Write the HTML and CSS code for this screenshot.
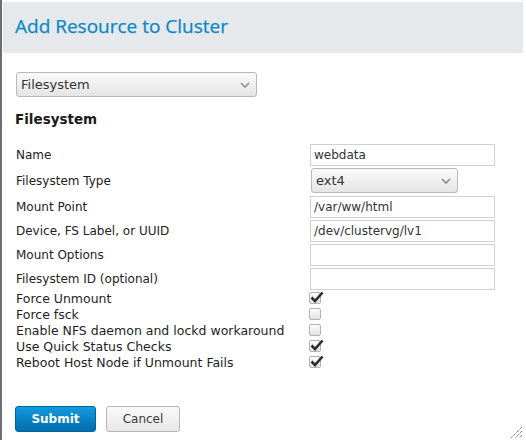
FILE: index.html
```html
<!DOCTYPE html>
<html>
<head>
<meta charset="utf-8">
<link rel="stylesheet" href="styles.css">
</head>
<body>
<div class="frame">
  <header class="hdr"><h1 class="title">Add Resource to Cluster</h1></header>
  <main class="content">
    <div class="sel sel-top"><span>Filesystem</span><svg class="chev" viewBox="0 0 10 6" width="10" height="6"><path d="M1 1 L5 5 L9 1" fill="none" stroke="#8a8a8a" stroke-width="1.6"/></svg></div>
    <h2 class="sub">Filesystem</h2>
    <div class="fields">
      <label class="lbl">Name</label><div class="inp">webdata</div>
      <label class="lbl">Filesystem Type</label><div class="sel sel-type"><span>ext4</span><svg class="chev" viewBox="0 0 10 6" width="10" height="6"><path d="M1 1 L5 5 L9 1" fill="none" stroke="#8a8a8a" stroke-width="1.6"/></svg></div>
      <label class="lbl">Mount Point</label><div class="inp">/var/ww/html</div>
      <label class="lbl">Device, FS Label, or UUID</label><div class="inp">/dev/clustervg/lv1</div>
      <label class="lbl">Mount Options</label><div class="inp"></div>
      <label class="lbl">Filesystem ID (optional)</label><div class="inp"></div>
    </div>
    <div class="checks">
      <span class="clbl">Force Unmount</span><span class="cb"><svg class="tick" viewBox="0 0 15 14" width="15" height="14"><path d="M2.5 7.5 L6 11 L13.5 2.5" fill="none" stroke="#2b2b2b" stroke-width="2.6"/></svg></span>
      <span class="clbl">Force fsck</span><span class="cb"></span>
      <span class="clbl">Enable NFS daemon and lockd workaround</span><span class="cb"></span>
      <span class="clbl">Use Quick Status Checks</span><span class="cb"><svg class="tick" viewBox="0 0 15 14" width="15" height="14"><path d="M2.5 7.5 L6 11 L13.5 2.5" fill="none" stroke="#2b2b2b" stroke-width="2.6"/></svg></span>
      <span class="clbl">Reboot Host Node if Unmount Fails</span><span class="cb"><svg class="tick" viewBox="0 0 15 14" width="15" height="14"><path d="M2.5 7.5 L6 11 L13.5 2.5" fill="none" stroke="#2b2b2b" stroke-width="2.6"/></svg></span>
    </div>
    <div class="actions">
      <button class="btn btn-primary">Submit</button>
      <button class="btn btn-default">Cancel</button>
    </div>
  </main>
  <svg class="grip" viewBox="0 0 12 12" width="12" height="12"><path d="M11 4 L4 11 M11 8 L8 11 M11 0 L0 11" stroke="#444" stroke-width="1" stroke-dasharray="1 1" fill="none"/></svg>
</div>
</body>
</html>
```
FILE: styles.css
```css
html, body {
  margin: 0;
  padding: 0;
  background: #ffffff;
}
body {
  font-family: "DejaVu Sans", sans-serif;
  color: #222;
}
.frame {
  position: relative;
  box-sizing: border-box;
  height: 440px;
  border-left: 2px solid #6e6e6e;
  padding-top: 2px;
}
.hdr {
  margin: 0 3px 0 1px;
  height: 51px;
  background: #e6e9ec;
  display: flex;
  align-items: center;
  padding-left: 12px;
}
.title {
  margin: 0;
  font-family: "Open Sans", sans-serif;
  font-weight: 400;
  font-size: 19px;
  line-height: 24px;
  color: #0a88c8;
  position: relative;
  top: -2px;
  -webkit-text-stroke: 0.25px #0a88c8;
}
.content {
  padding: 19px 0 0 14px;
}
.sel {
  box-sizing: border-box;
  height: 25px;
  border: 1px solid #b9b9b9;
  border-radius: 3px;
  background: linear-gradient(#fbfbfb, #e4e4e4);
  display: flex;
  align-items: center;
  justify-content: space-between;
  padding: 0 6px 0 4px;
  font-size: 13px;
  color: #333;
}
.sel-top {
  width: 241px;
}
.sel-type {
  width: 147px;
  margin-left: 1px;
  margin-bottom: 1px;
}
.chev {
  display: block;
}
.sub {
  margin: 14px 0 0 -1px;
  font-family: "DejaVu Sans", sans-serif;
  font-weight: 700;
  font-size: 13.5px;
  line-height: 17px;
  color: #1a1a1a;
}
.fields {
  margin-top: 16px;
  display: grid;
  grid-template-columns: 294px 185px;
  row-gap: 2px;
  align-items: center;
}
.lbl {
  font-size: 12px;
  color: #222;
}
.inp {
  box-sizing: border-box;
  height: 22px;
  border: 1px solid #d1d1d1;
  padding: 0 3px;
  font-size: 12px;
  line-height: 20px;
  color: #333;
}
.checks {
  display: grid;
  grid-template-columns: 293px 14px;
  grid-auto-rows: 16px;
  align-items: center;
}
.clbl {
  font-size: 12.5px;
  color: #1e1e1e;
  white-space: nowrap;
}
.cb {
  position: relative;
  box-sizing: border-box;
  width: 12px;
  height: 12px;
  border: 1px solid #b3b3b3;
  border-radius: 2px;
  background: linear-gradient(#fdfdfd, #e2e2e2);
}
.tick {
  position: absolute;
  left: -1px;
  top: -3px;
}
.actions {
  margin: 36px 0 0 -1px;
  display: flex;
  gap: 10px;
}
.btn {
  box-sizing: border-box;
  height: 26px;
  border-radius: 3px;
  font-family: "DejaVu Sans", sans-serif;
  font-size: 12px;
  padding: 0;
  cursor: pointer;
}
.btn-primary {
  width: 81px;
  border: 1px solid #00659c;
  background: linear-gradient(#139ade, #006dad);
  color: #ffffff;
  font-weight: 700;
}
.btn-default {
  width: 74px;
  border: 1px solid #b7b7b7;
  background: linear-gradient(#fafafa, #e8e8e8);
  color: #3a3a3a;
}
.grip {
  position: absolute;
  right: 3px;
  bottom: 1px;
}
```
